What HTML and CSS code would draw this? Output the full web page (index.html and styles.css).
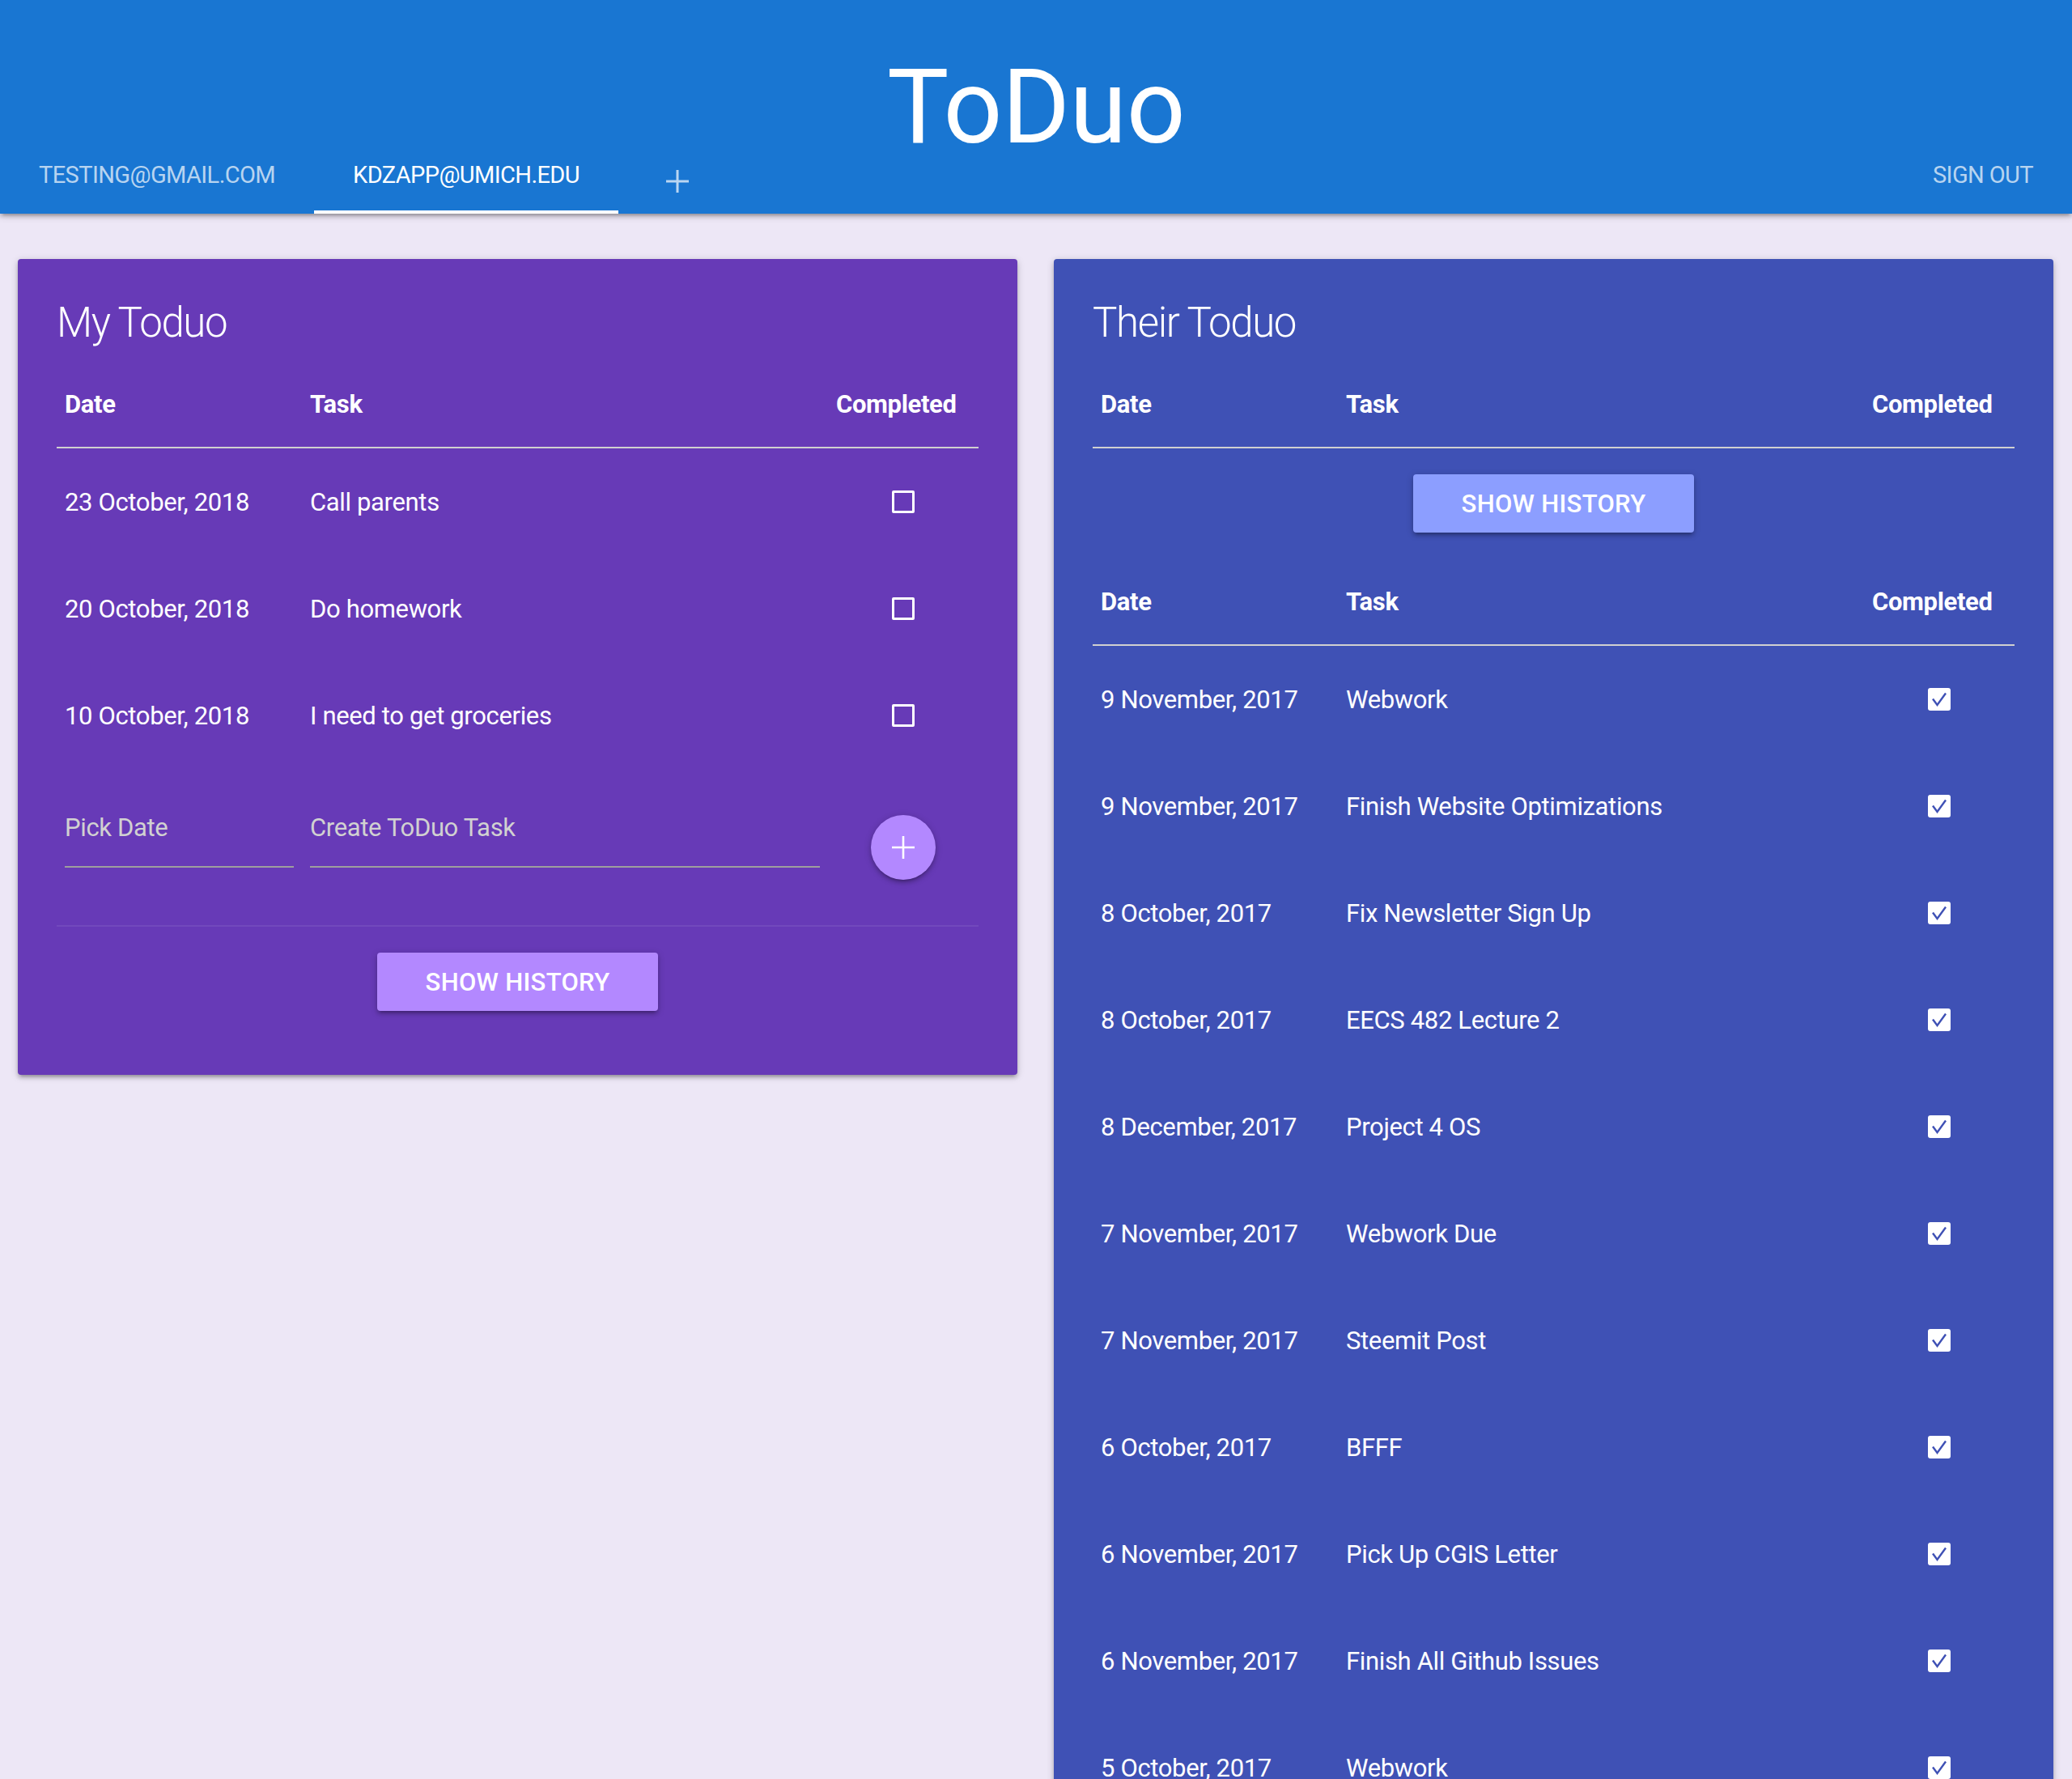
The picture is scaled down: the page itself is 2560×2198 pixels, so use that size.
FILE: index.html
```html
<!DOCTYPE html>
<html lang="en">
<head>
<meta charset="utf-8">
<title>ToDuo</title>
<link rel="stylesheet" href="styles.css">
</head>
<body>
<header class="topbar">
  <h1 class="brand">ToDuo</h1>
  <nav class="topnav">
    <ul class="tabs">
      <li class="tab"><a href="#">testing@gmail.com</a></li>
      <li class="tab tab--active"><a href="#">kdzapp@umich.edu</a></li>
      <li class="tab tab--add"><a href="#" aria-label="Add account"><svg width="28" height="28" viewBox="0 0 28 28"><path d="M14 0v28M0 14h28" fill="none" stroke="currentColor" stroke-width="3"/></svg></a></li>
    </ul>
    <a class="signout" href="#">Sign out</a>
  </nav>
</header>

<main class="board">
  <section class="card card--mine">
    <h2 class="card-title">My Toduo</h2>
    <table class="todo-table">
      <colgroup><col class="col-date"><col class="col-task"><col class="col-done"></colgroup>
      <thead>
        <tr><th>Date</th><th>Task</th><th>Completed</th></tr>
      </thead>
      <tbody>
        <tr><td>23 October, 2018</td><td>Call parents</td><td class="done"><span class="box"></span></td></tr>
        <tr><td>20 October, 2018</td><td>Do homework</td><td class="done"><span class="box"></span></td></tr>
        <tr><td>10 October, 2018</td><td>I need to get groceries</td><td class="done"><span class="box"></span></td></tr>
        <tr class="new-row">
          <td><input class="field" type="text" placeholder="Pick Date"></td>
          <td><input class="field" type="text" placeholder="Create ToDuo Task"></td>
          <td class="done"><button class="fab" aria-label="Add task"><svg width="28" height="28" viewBox="0 0 28 28"><path d="M14 0v28M0 14h28" fill="none" stroke="#fff" stroke-width="2.6"/></svg></button></td>
        </tr>
      </tbody>
    </table>
    <div class="actions"><button class="btn btn--mine">Show History</button></div>
  </section>

  <section class="card card--theirs">
    <h2 class="card-title">Their Toduo</h2>
    <table class="todo-table">
      <colgroup><col class="col-date"><col class="col-task"><col class="col-done"></colgroup>
      <thead>
        <tr><th>Date</th><th>Task</th><th>Completed</th></tr>
      </thead>
    </table>
    <div class="actions"><button class="btn btn--theirs">Show History</button></div>
    <table class="todo-table">
      <colgroup><col class="col-date"><col class="col-task"><col class="col-done"></colgroup>
      <thead>
        <tr><th>Date</th><th>Task</th><th>Completed</th></tr>
      </thead>
      <tbody>
        <tr><td>9 November, 2017</td><td>Webwork</td><td class="done"><svg class="tick" width="28" height="28" viewBox="0 0 28 28"><rect width="28" height="28" rx="3" fill="#fff"/><path d="M6 13.5l5.5 7.5L22 6.5" fill="none" stroke="#3f51b5" stroke-width="2.4"/></svg></td></tr>
        <tr><td>9 November, 2017</td><td>Finish Website Optimizations</td><td class="done"><svg class="tick" width="28" height="28" viewBox="0 0 28 28"><rect width="28" height="28" rx="3" fill="#fff"/><path d="M6 13.5l5.5 7.5L22 6.5" fill="none" stroke="#3f51b5" stroke-width="2.4"/></svg></td></tr>
        <tr><td>8 October, 2017</td><td>Fix Newsletter Sign Up</td><td class="done"><svg class="tick" width="28" height="28" viewBox="0 0 28 28"><rect width="28" height="28" rx="3" fill="#fff"/><path d="M6 13.5l5.5 7.5L22 6.5" fill="none" stroke="#3f51b5" stroke-width="2.4"/></svg></td></tr>
        <tr><td>8 October, 2017</td><td>EECS 482 Lecture 2</td><td class="done"><svg class="tick" width="28" height="28" viewBox="0 0 28 28"><rect width="28" height="28" rx="3" fill="#fff"/><path d="M6 13.5l5.5 7.5L22 6.5" fill="none" stroke="#3f51b5" stroke-width="2.4"/></svg></td></tr>
        <tr><td>8 December, 2017</td><td>Project 4 OS</td><td class="done"><svg class="tick" width="28" height="28" viewBox="0 0 28 28"><rect width="28" height="28" rx="3" fill="#fff"/><path d="M6 13.5l5.5 7.5L22 6.5" fill="none" stroke="#3f51b5" stroke-width="2.4"/></svg></td></tr>
        <tr><td>7 November, 2017</td><td>Webwork Due</td><td class="done"><svg class="tick" width="28" height="28" viewBox="0 0 28 28"><rect width="28" height="28" rx="3" fill="#fff"/><path d="M6 13.5l5.5 7.5L22 6.5" fill="none" stroke="#3f51b5" stroke-width="2.4"/></svg></td></tr>
        <tr><td>7 November, 2017</td><td>Steemit Post</td><td class="done"><svg class="tick" width="28" height="28" viewBox="0 0 28 28"><rect width="28" height="28" rx="3" fill="#fff"/><path d="M6 13.5l5.5 7.5L22 6.5" fill="none" stroke="#3f51b5" stroke-width="2.4"/></svg></td></tr>
        <tr><td>6 October, 2017</td><td>BFFF</td><td class="done"><svg class="tick" width="28" height="28" viewBox="0 0 28 28"><rect width="28" height="28" rx="3" fill="#fff"/><path d="M6 13.5l5.5 7.5L22 6.5" fill="none" stroke="#3f51b5" stroke-width="2.4"/></svg></td></tr>
        <tr><td>6 November, 2017</td><td>Pick Up CGIS Letter</td><td class="done"><svg class="tick" width="28" height="28" viewBox="0 0 28 28"><rect width="28" height="28" rx="3" fill="#fff"/><path d="M6 13.5l5.5 7.5L22 6.5" fill="none" stroke="#3f51b5" stroke-width="2.4"/></svg></td></tr>
        <tr><td>6 November, 2017</td><td>Finish All Github Issues</td><td class="done"><svg class="tick" width="28" height="28" viewBox="0 0 28 28"><rect width="28" height="28" rx="3" fill="#fff"/><path d="M6 13.5l5.5 7.5L22 6.5" fill="none" stroke="#3f51b5" stroke-width="2.4"/></svg></td></tr>
        <tr><td>5 October, 2017</td><td>Webwork</td><td class="done"><svg class="tick" width="28" height="28" viewBox="0 0 28 28"><rect width="28" height="28" rx="3" fill="#fff"/><path d="M6 13.5l5.5 7.5L22 6.5" fill="none" stroke="#3f51b5" stroke-width="2.4"/></svg></td></tr>
      </tbody>
    </table>
  </section>
</main>
</body>
</html>
```

FILE: styles.css
```css
* { box-sizing: border-box; }

html, body { margin: 0; }

body {
  background: #ede7f6;
  font-family: Roboto, "Noto Sans", "Liberation Sans", sans-serif;
  color: #fff;
}

a { text-decoration: none; color: inherit; }

/* ---------- top bar ---------- */
.topbar {
  position: relative;
  z-index: 1;
  display: grid;
  height: 264px;
  background: #1976d2;
  box-shadow: 0 4px 4px 0 rgba(0,0,0,.14), 0 6px 2px -4px rgba(0,0,0,.12), 0 2px 10px 0 rgba(0,0,0,.2);
}

.brand {
  grid-area: 1 / 1;
  align-self: start;
  margin: 68px 0 0;
  text-align: center;
  font-size: 128px;
  font-weight: 400;
  line-height: 128px;
  letter-spacing: -0.5px;
}

.topnav {
  grid-area: 1 / 1;
  align-self: end;
  display: flex;
  justify-content: space-between;
  height: 100px;
}

.tabs {
  display: flex;
  margin: 0;
  padding: 0;
  list-style: none;
}

.tab a,
.signout {
  display: block;
  height: 100px;
  padding: 4px 48px 0;
  line-height: 96px;
  font-size: 29px;
  letter-spacing: -0.6px;
  text-transform: uppercase;
  color: rgba(255,255,255,.7);
  white-space: nowrap;
}

.tab--active a {
  color: #fff;
  box-shadow: inset 0 -4px 0 #fff;
}

.tab--add a {
  display: flex;
  align-items: center;
  padding: 19px 59px 0;
}

.tab--add svg { display: block; }

/* ---------- board ---------- */
.board {
  display: grid;
  grid-template-columns: 1235px 1235px;
  column-gap: 45px;
  align-items: start;
  padding: 56px 23px 0 22px;
}

.card {
  padding: 48px 48px 47px;
  border-radius: 4px;
  box-shadow: 0 4px 4px 0 rgba(0,0,0,.14), 0 6px 2px -4px rgba(0,0,0,.12), 0 2px 10px 0 rgba(0,0,0,.2);
}

.card--mine { background: #673ab7; }
.card--theirs { background: #3f51b5; }

.card-title {
  margin: 0 0 17px;
  font-size: 51px;
  font-weight: 300;
  line-height: 61px;
  letter-spacing: -1.4px;
}

/* ---------- tables ---------- */
.todo-table {
  width: 100%;
  table-layout: fixed;
  border-collapse: separate;
  border-spacing: 0;
}

.col-date { width: 303px; }
.col-done { width: 186px; }

.todo-table th,
.todo-table td {
  padding: 0 10px;
  text-align: left;
  vertical-align: middle;
  font-size: 31px;
  letter-spacing: -0.35px;
  white-space: nowrap;
}

.todo-table th {
  height: 108px;
  font-weight: 700;
  border-bottom: 2px solid #d0d0d0;
}

.todo-table tbody td { height: 132px; }

.todo-table td.done { text-align: center; }

.box {
  display: block;
  width: 28px;
  height: 28px;
  margin: 0 auto;
  border: 3px solid #fff;
  border-radius: 2px;
}

.tick { display: block; margin: 0 auto; }

.todo-table .new-row td {
  height: 195px;
  vertical-align: top;
  padding-top: 54px;
  border-bottom: 2px solid rgba(255,255,255,.08);
}

.todo-table .new-row td.done {
  vertical-align: middle;
  padding-top: 0;
}

.field {
  display: block;
  width: 100%;
  height: 68px;
  margin: 0;
  padding: 0 0 30px;
  border: 0;
  border-bottom: 2px solid #9e9e9e;
  background: transparent;
  font-family: inherit;
  font-size: 31px;
  letter-spacing: -0.35px;
  color: #fff;
  outline: none;
}

.field::placeholder { color: #d1d1d1; opacity: 1; }

.fab {
  display: flex;
  align-items: center;
  justify-content: center;
  width: 80px;
  height: 80px;
  margin: 0 auto;
  padding: 0;
  border: 0;
  border-radius: 50%;
  background: #b388ff;
  box-shadow: 0 4px 4px 0 rgba(0,0,0,.14), 0 6px 2px -4px rgba(0,0,0,.12), 0 2px 10px 0 rgba(0,0,0,.2);
}

/* ---------- buttons ---------- */
.actions {
  display: flex;
  justify-content: center;
  padding: 32px 0;
}

.btn {
  height: 72px;
  padding: 0 60px;
  border: 0;
  border-radius: 4px;
  font-family: inherit;
  font-size: 31px;
  font-weight: 500;
  letter-spacing: .3px;
  text-transform: uppercase;
  color: #fff;
  box-shadow: 0 4px 4px 0 rgba(0,0,0,.14), 0 6px 2px -4px rgba(0,0,0,.12), 0 2px 10px 0 rgba(0,0,0,.2);
}

.btn--mine { background: #b388ff; }
.btn--theirs { background: #8c9eff; }
```
